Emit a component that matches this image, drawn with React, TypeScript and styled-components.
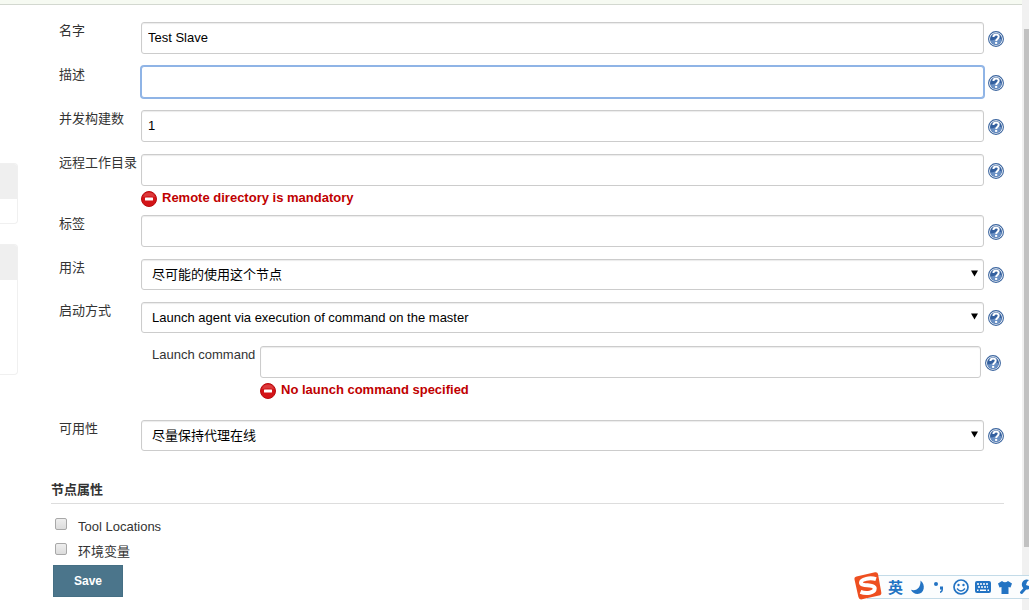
import React from "react";
import styled, { createGlobalStyle, css } from "styled-components";

const GlobalStyle = createGlobalStyle`
  *, *::before, *::after { box-sizing: border-box; }
  body {
    margin: 0;
    background: #fff;
    color: #333;
    font: 13px/18px "Liberation Sans", "Noto Sans CJK SC", sans-serif;
  }
  input, select, button { font: inherit; margin: 0; }
`;

const Page = styled.div`
  display: flex;
  min-height: 100vh;
`;

const Body = styled.div`
  flex: 1;
  min-width: 0;
`;

const Crumbs = styled.div`
  height: 5px;
  background: #f6faf2;
  border-bottom: 1px solid #d3d8d0;
`;

const Columns = styled.div`
  display: flex;
`;

const SidePanel = styled.aside`
  width: 18px;
  flex: none;
  padding-top: 158px;
  display: flex;
  flex-direction: column;
  gap: 20px;
`;

const Pane = styled.section<{ $body: number }>`
  border: 1px solid #f0f0f0;
  border-left: 0;
  border-radius: 0 4px 4px 0;
  overflow: hidden;
  padding-bottom: ${(p) => p.$body}px;
`;

const PaneHead = styled.div`
  height: 35px;
  background: #efefef;
`;

const Main = styled.main`
  flex: 1;
  min-width: 0;
  padding: 17px 18px 0 33px;
`;

const Row = styled.div<{ $gap?: number }>`
  display: flex;
  align-items: flex-start;
  padding-left: 8px;
  margin-bottom: ${(p) => p.$gap ?? 12}px;
`;

const SubRow = styled(Row)`
  padding: 0 3px 0 101px;
`;

const Label = styled.label<{ $width?: number }>`
  width: ${(p) => p.$width ?? 82}px;
  flex: none;
  white-space: nowrap;
`;

const Control = styled.div`
  flex: 1;
  min-width: 0;
`;

const box = css`
  display: block;
  width: 100%;
  border: 1px solid #ccc;
  border-radius: 3px;
  background: #fff;
  color: #000;
  box-shadow: inset 0 1px 1px rgba(0, 0, 0, 0.08);
  outline: none;
`;

const TextInput = styled.input<{ $active?: boolean }>`
  ${box}
  height: 32px;
  padding: 0 6px 2px;
  ${(p) =>
    p.$active &&
    css`
      border-color: #8fb4e6;
      box-shadow: 0 0 0 1px #8fb4e6;
    `}
`;

const SelectWrap = styled.div`
  position: relative;
`;

const Select = styled.select`
  ${box}
  appearance: none;
  height: 31px;
  padding: 0 24px 0 10px;
`;

const Arrow = styled.svg`
  position: absolute;
  right: 6px;
  top: 11px;
  pointer-events: none;
`;

const HelpButton = styled.button<{ $top: number }>`
  flex: none;
  width: 16px;
  height: 16px;
  margin: ${(p) => p.$top}px 0 0 4px;
  padding: 0;
  border: 0;
  background: none;
  svg { display: block; }
`;

const ErrorText = styled.div`
  display: flex;
  gap: 5px;
  margin-top: 3px;
  color: #c00000;
  font-weight: bold;
  svg { margin-top: 2px; }
`;

const SectionTitle = styled.h2`
  margin: 0 0 11px;
  padding-bottom: 4px;
  border-bottom: 1px solid #ddd;
  font-size: 13px;
  line-height: 18px;
`;

const CheckLine = styled.div`
  display: flex;
  align-items: flex-start;
  gap: 11px;
  height: 25px;
  padding-left: 4px;
  label { padding-top: 3px; }
`;

const Checkbox = styled.input`
  appearance: none;
  width: 12px;
  height: 12px;
  margin: 3px 0 0;
  border: 1px solid #a8a8a8;
  border-radius: 2px;
  background: linear-gradient(#eee, #dcdcdc);
`;

const SaveButton = styled.button`
  display: block;
  width: 70px;
  height: 32px;
  margin-left: 2px;
  padding: 0;
  border: 1px solid #456f84;
  background: #4b758b;
  color: #fff;
  font-size: 12px;
  font-weight: bold;
`;

const ScrollTrack = styled.div`
  flex: none;
  width: 7px;
  padding: 29px 0 63px 2px;
  background: #f1f1f1;
  display: flex;
`;

const ScrollThumb = styled.div`
  flex: 1;
  background: #c1c1c1;
`;

const ImeBar = styled.div`
  position: fixed;
  right: 0;
  bottom: 11px;
  width: 162px;
  height: 24px;
  padding-left: 20px;
  display: flex;
  align-items: center;
  border: 1px solid #c3dbe8;
  border-right: 0;
  background: #fbfdfe;
  color: #2273c3;
`;

const ImeLogo = styled.svg`
  position: absolute;
  left: -15px;
  top: -5px;
`;

const ImeMode = styled.span`
  flex: none;
  width: 21px;
  font: bold 15px/20px "Noto Sans CJK SC", sans-serif;
`;

const ImeTools = styled.svg`
  flex: none;
`;

const Help = ({ top = 9 }: { top?: number }) => (
  <HelpButton type="button" aria-label="Help" $top={top}>
    <svg width="16" height="16" viewBox="0 0 16 16">
      <circle cx="8" cy="8" r="7.4" fill="#fff" stroke="#3b659f" strokeWidth="1.1" />
      <circle cx="8" cy="8" r="6" fill="#34609f" />
      <path d="M2.400 9.500A5.800 5.800 0 0 0 13.700 9Q13 6.500 8.500 8T2.400 9.500Z" fill="#6a90c4" />
      <path d="M5.400 6C5.400 2.700 10.700 2.700 10.700 5.800C10.700 7.900 8.200 7.500 8.200 9.900" fill="none" stroke="#fff" strokeWidth="2" />
      <rect x="7.100" y="10.900" width="2.100" height="2" fill="#fff" />
    </svg>
  </HelpButton>
);

const Problem = ({ text }: { text: string }) => (
  <ErrorText role="alert">
    <svg width="16" height="16" viewBox="0 0 16 16">
      <circle cx="8" cy="8" r="7.500" fill="#d31418" stroke="#b80c10" />
      <path d="M2 6A6.300 6.300 0 0 1 14 6Q8 4.500 2 6Z" fill="#dc3a3c" />
      <rect x="4" y="6.500" width="8" height="3" rx=".5" fill="#fff" />
    </svg>
    {text}
  </ErrorText>
);

type FieldProps = { id: string; label: string; value?: string; active?: boolean; error?: string; gap?: number };

const TextField = ({ id, label, value, active, error, gap }: FieldProps) => (
  <Row $gap={gap}>
    <Label htmlFor={id}>{label}</Label>
    <Control>
      <TextInput id={id} type="text" defaultValue={value} $active={active} />
      {error && <Problem text={error} />}
    </Control>
    <Help />
  </Row>
);

const SelectField = ({ id, label, value, gap }: FieldProps) => (
  <Row $gap={gap}>
    <Label htmlFor={id}>{label}</Label>
    <Control>
      <SelectWrap>
        <Select id={id}>
          <option>{value}</option>
        </Select>
        <Arrow width="7" height="7" viewBox="0 0 7 7">
          <path d="M0 .5H7L3.500 6.500Z" fill="#000" />
        </Arrow>
      </SelectWrap>
    </Control>
    <Help top={8} />
  </Row>
);

const InputMethod = () => (
  <ImeBar>
    <ImeLogo width="30" height="30" viewBox="0 0 30 30">
      <path d="M3.500 5.500L22 1.300Q24.500 .8 25 3L28.300 21.500Q28.700 24 26 24.600L9 28.300Q6 28.900 5.400 26L1.500 8.500Q1 6 3.500 5.500Z" fill="#ee4f20" />
      <path d="M23 8.200C17 6.300 8 8 8 11.700C8 15.700 21.700 12.800 21.700 17.500C21.700 22 13 23 7.500 20.800" fill="none" stroke="#fff" strokeWidth="4" />
    </ImeLogo>
    <ImeMode>英</ImeMode>
    <ImeTools width="120" height="22" viewBox="909 576 120 22" fill="#2273c3">
      <path d="M920.500 580.500C926 584.500 924.500 594 917.500 594C914.500 594 912 592.300 911 589.800C917 591.500 921 587 920.500 580.500Z" />
      <circle cx="936" cy="584" r="2" />
      <path d="M940 586.500H943V589Q943 592.500 940 593V591.500Q941.500 591 941.500 589.500H940Z" />
      <circle cx="961" cy="587" r="7" fill="none" stroke="#2273c3" strokeWidth="1.700" />
      <circle cx="958.500" cy="585" r="1.200" />
      <circle cx="963.500" cy="585" r="1.200" />
      <path d="M957 588.500Q961 593.500 965 588.500" fill="none" stroke="#2273c3" strokeWidth="1.300" />
      <rect x="975" y="581" width="16" height="12" rx="2" />
      <path d="M977 584H989M978 587H988" stroke="#fff" strokeWidth="1.500" strokeDasharray="2 1" />
      <path d="M977 590.300H978.500M980 590.300H986M987.500 590.300H989" stroke="#fff" strokeWidth="1.500" />
      <path d="M1002 581Q1005 583.500 1008 581L1012 583.500L1010.500 587.500L1008.500 587V594H1001.500V587L999.500 587.500L998 583.500Z" />
      <path d="M1021.500 592.500L1026 587.500" stroke="#2273c3" strokeWidth="3" strokeLinecap="round" />
      <path d="M1029 580A5 5 0 1 0 1029 589V586L1026 585L1027 582Z" />
    </ImeTools>
  </ImeBar>
);

export default function App() {
  return (
    <>
      <GlobalStyle />
      <Page>
        <Body>
          <Crumbs />
          <Columns>
            <SidePanel>
              <Pane $body={24}><PaneHead /></Pane>
              <Pane $body={94}><PaneHead /></Pane>
            </SidePanel>
            <Main>
              <form onSubmit={(e) => e.preventDefault()}>
                <TextField id="name" label="名字" value="Test Slave" />
                <TextField id="description" label="描述" active />
                <TextField id="executors" label="并发构建数" value="1" />
                <TextField id="remote" label="远程工作目录" error="Remote directory is mandatory" gap={8} />
                <TextField id="labels" label="标签" />
                <SelectField id="usage" label="用法" value="尽可能的使用这个节点" />
                <SelectField id="launcher" label="启动方式" value="Launch agent via execution of command on the master" gap={13} />
                <SubRow $gap={21}>
                  <Label htmlFor="command" $width={108}>Launch command</Label>
                  <Control>
                    <TextInput id="command" type="text" />
                    <Problem text="No launch command specified" />
                  </Control>
                  <Help />
                </SubRow>
                <SelectField id="availability" label="可用性" value="尽量保持代理在线" gap={30} />
                <SectionTitle>节点属性</SectionTitle>
                <CheckLine>
                  <Checkbox id="tools" type="checkbox" />
                  <label htmlFor="tools">Tool Locations</label>
                </CheckLine>
                <CheckLine>
                  <Checkbox id="env" type="checkbox" />
                  <label htmlFor="env">环境变量</label>
                </CheckLine>
                <SaveButton type="submit">Save</SaveButton>
              </form>
            </Main>
          </Columns>
        </Body>
        <ScrollTrack><ScrollThumb /></ScrollTrack>
      </Page>
      <InputMethod />
    </>
  );
}
